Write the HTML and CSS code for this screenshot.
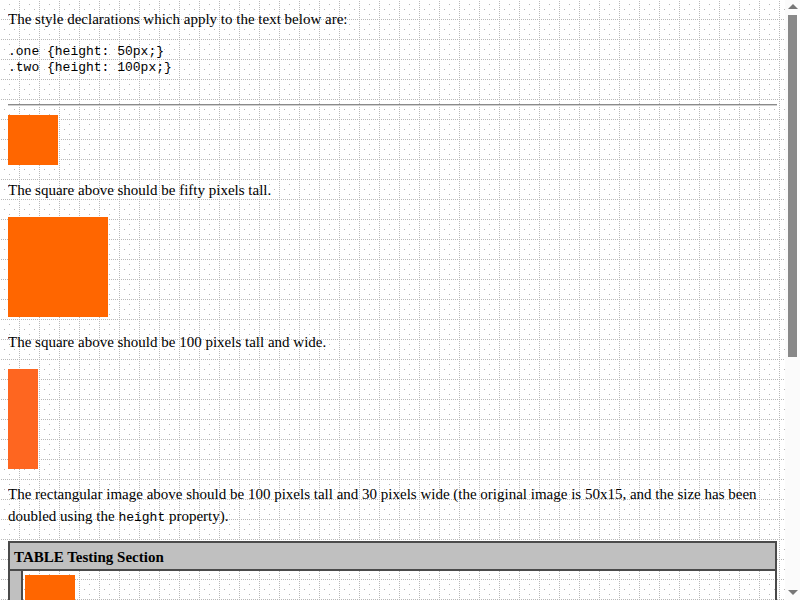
FILE: index.html
```html
<!DOCTYPE html>
<html>
<head>
<meta charset="utf-8">
<title>CSS1 Test Suite: 5.5.26 height</title>
<link rel="stylesheet" href="styles.css">
</head>
<body>
<p class="intro">The style declarations which apply to the text below are:</p>
<pre class="decl">.one {height: 50px;}
.two {height: 100px;}
</pre>
<hr class="rule">
<div class="box box-one"></div>
<p class="note">The square above should be fifty pixels tall.</p>
<div class="box box-two"></div>
<p class="note">The square above should be 100 pixels tall and wide.</p>
<div class="box box-rect"></div>
<p class="note">The rectangular image above should be 100 pixels tall and 30 pixels wide (the original image is 50x15, and the size has been doubled using the <code class="mono">height</code> property).</p>
<table class="tabletest">
<tr><td colspan="2" class="head"><strong>TABLE Testing Section</strong></td></tr>
<tr><td class="side">&nbsp;</td><td class="cell"><div class="box box-one"></div></td></tr>
</table>
<div class="scrollbar">
  <div class="arrow up"></div>
  <div class="thumb"></div>
  <div class="arrow down"></div>
</div>
</body>
</html>
```
FILE: styles.css
```css
html {
  overflow: hidden;
  background-color: #fff;
  background-image: url("data:image/svg+xml;utf8,<svg xmlns='http://www.w3.org/2000/svg' width='20' height='20' shape-rendering='crispEdges'><g fill='%23b8b8b8'><rect x='19' y='1' width='1' height='1'/><rect x='19' y='3' width='1' height='1'/><rect x='19' y='5' width='1' height='1'/><rect x='19' y='7' width='1' height='1'/><rect x='19' y='9' width='1' height='1'/><rect x='19' y='11' width='1' height='1'/><rect x='19' y='13' width='1' height='1'/><rect x='19' y='15' width='1' height='1'/><rect x='19' y='17' width='1' height='1'/><rect x='19' y='19' width='1' height='1'/><rect x='1' y='19' width='1' height='1'/><rect x='3' y='19' width='1' height='1'/><rect x='5' y='19' width='1' height='1'/><rect x='7' y='19' width='1' height='1'/><rect x='9' y='19' width='1' height='1'/><rect x='11' y='19' width='1' height='1'/><rect x='13' y='19' width='1' height='1'/><rect x='15' y='19' width='1' height='1'/><rect x='17' y='19' width='1' height='1'/><rect x='9' y='4' width='1' height='1'/><rect x='4' y='9' width='1' height='1'/><rect x='14' y='9' width='1' height='1'/><rect x='9' y='14' width='1' height='1'/></g></svg>");
  background-repeat: repeat;
}

body {
  margin: 8px 23px 0 8px;
  font-family: "Liberation Serif", "Times New Roman", serif;
  font-size: 15px;
  line-height: 22px;
  color: #000;
}

.intro {
  margin: 0;
}

.decl {
  margin: 14px 0 0;
  font-family: "Liberation Mono", "Courier New", monospace;
  font-size: 13px;
  line-height: 16px;
}

.rule {
  margin: 28px 0 9px;
  border: 0;
  border-top: 1px solid #8a8a8a;
  border-bottom: 1px solid #d0d0d0;
  height: 0;
}

.box {
  background: #ff6600;
}

.box-one {
  width: 50px;
  height: 50px;
}

.box-two {
  width: 100px;
  height: 100px;
  margin-top: 16px;
}

.box-rect {
  width: 30px;
  height: 100px;
  margin-top: 16px;
  background: #fe6620;
}

.note {
  margin: 14px 0 0;
}

.mono {
  font-family: "Liberation Mono", "Courier New", monospace;
  font-size: 13px;
  line-height: 1;
}

.tabletest {
  margin-top: 14px;
  width: 100%;
  border-collapse: collapse;
  border: 2px solid #4a4a4a;
}

.tabletest td {
  border: 2px solid #4a4a4a;
  padding: 0;
}

.head {
  background: #c0c0c0;
  height: 25px;
  padding: 1px 4px 0 !important;
  line-height: 24px;
}

.side {
  background: #c0c0c0;
  width: 11px;
  font-size: 1px;
}

.cell {
  padding: 4px 2px 1px !important;
}

.scrollbar {
  position: fixed;
  top: 0;
  right: 0;
  width: 15px;
  height: 600px;
  background: #fbfbfb;
}

.thumb {
  position: absolute;
  left: 3px;
  top: 15px;
  width: 9px;
  height: 342px;
  background: #888;
}

.arrow {
  position: absolute;
  left: 3px;
  width: 0;
  height: 0;
  border-left: 5px solid transparent;
  border-right: 5px solid transparent;
}

.up {
  top: 4px;
  border-bottom: 5px solid #777;
}

.down {
  bottom: 5px;
  border-top: 5px solid #777;
}
```
